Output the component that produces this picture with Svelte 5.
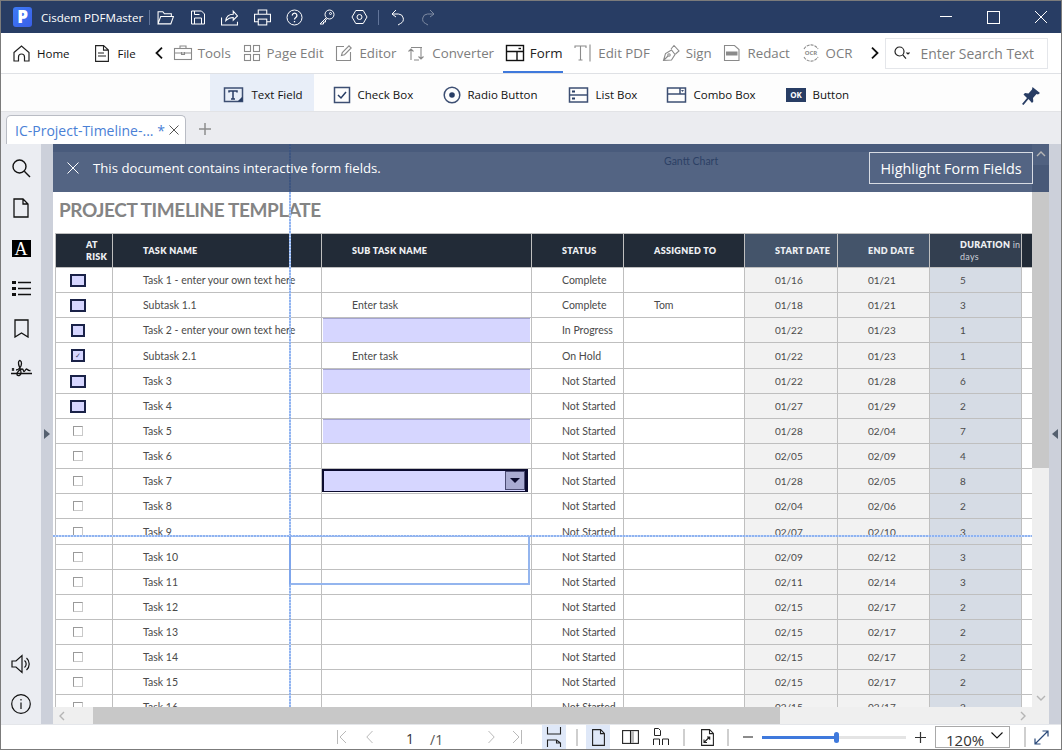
<script lang="ts">
	const tools = [
		{ label: 'Tools', icon: 'tools' },
		{ label: 'Page Edit', icon: 'pages' },
		{ label: 'Editor', icon: 'editor' },
		{ label: 'Converter', icon: 'convert' },
		{ label: 'Form', icon: 'form', active: true },
		{ label: 'Edit PDF', icon: 'editpdf' },
		{ label: 'Sign', icon: 'sign' },
		{ label: 'Redact', icon: 'redact' },
		{ label: 'OCR', icon: 'ocr' }
	];

	const formTools = [
		{ label: 'Text Field', icon: 'text', cls: 'w-text', active: true },
		{ label: 'Check Box', icon: 'check', cls: 'w-check' },
		{ label: 'Radio Button', icon: 'radio', cls: 'w-radio' },
		{ label: 'List Box', icon: 'list', cls: 'w-list' },
		{ label: 'Combo Box', icon: 'combo', cls: 'w-combo' },
		{ label: 'Button', icon: 'ok', cls: 'w-ok' }
	];

	// name, sub task, status, assigned, start, end, duration, box style, field type
	const rows = [
		['Task 1 - enter your own text here', '', 'Complete', '', '01/16', '01/21', '5', 'big', ''],
		['Subtask 1.1', 'Enter task', 'Complete', 'Tom', '01/18', '01/21', '3', 'big', ''],
		['Task 2 - enter your own text here', '', 'In Progress', '', '01/22', '01/23', '1', 'mid', 'field'],
		['Subtask 2.1', 'Enter task', 'On Hold', '', '01/22', '01/23', '1', 'tick', ''],
		['Task 3', '', 'Not Started', '', '01/22', '01/28', '6', 'big', 'field'],
		['Task 4', '', 'Not Started', '', '01/27', '01/29', '2', 'big', ''],
		['Task 5', '', 'Not Started', '', '01/28', '02/04', '7', '', 'field'],
		['Task 6', '', 'Not Started', '', '02/05', '02/09', '4', '', ''],
		['Task 7', '', 'Not Started', '', '01/28', '02/05', '8', '', 'combo'],
		['Task 8', '', 'Not Started', '', '02/04', '02/06', '2', '', ''],
		['Task 9', '', 'Not Started', '', '02/07', '02/10', '3', '', ''],
		['Task 10', '', 'Not Started', '', '02/09', '02/12', '3', '', ''],
		['Task 11', '', 'Not Started', '', '02/11', '02/14', '3', '', ''],
		['Task 12', '', 'Not Started', '', '02/15', '02/17', '2', '', ''],
		['Task 13', '', 'Not Started', '', '02/15', '02/17', '2', '', ''],
		['Task 14', '', 'Not Started', '', '02/15', '02/17', '2', '', ''],
		['Task 15', '', 'Not Started', '', '02/15', '02/17', '2', '', ''],
		['Task 16', '', 'Not Started', '', '02/15', '02/17', '2', '', '']
	];

	// these two rows are a pixel taller in the rendered PDF
	const tallRows = ['Subtask 2.1', 'Task 9'];
</script>

{#snippet toolIcon(name)}
	<svg class="ti" width="20" height="20" viewBox="0 0 20 20" fill="none" stroke="currentColor" stroke-width="1.1">
		{#if name === 'tools'}
			<rect x="1.5" y="5.5" width="17" height="11" /><path d="M1.5 10h17M7 5.5V3h6v2.5M8.5 9v2.5h3V9" />
		{:else if name === 'pages'}
			<rect x="2.5" y="2.5" width="6" height="6" /><rect x="11.5" y="2.5" width="6" height="6" /><rect x="2.5" y="11.5" width="6" height="6" /><rect x="11.5" y="11.5" width="6" height="6" />
		{:else if name === 'editor'}
			<path d="M10 3.5H2.5v14h14V9" /><path d="M7.5 12.5l.8-3L15 2.8l2.2 2.2-6.7 6.7z" />
		{:else if name === 'convert'}
			<path d="M4 17V6M1.5 8.5L4 6l2.5 2.500M4 4.5h11M14 4v12M11.5 13.5L14 16l2.5-2.500M7 17h5" />
		{:else if name === 'form'}
			<g stroke-width="1.4"><rect x="1.5" y="2.5" width="17" height="15" /><path d="M1.5 8.5h17M12 8.500v9" /><path d="M13.5 5.500h2.500" /></g>
		{:else if name === 'editpdf'}
			<path d="M2 5V3h11v2M7.5 3v14M5.5 17h4M17 1.500v17" />
		{:else if name === 'sign'}
			<path d="M2.5 17.5l2-7 6-3.500 3.500 4.500-3.500 5.500zM2.5 17.5l4.500-4.500M10 6l3-3.500 5 5.500-3.500 3" /><circle cx="8" cy="12" r="1.2" />
		{:else if name === 'redact'}
			<path d="M2.5 2.5h10l4.500 4v11h-14.500z" /><rect x="4" y="8.5" width="11.5" height="4" fill="currentColor" stroke="none" />
		{:else if name === 'ocr'}
			<path d="M3 6a8 8 0 0 1 14 0M3 14a8 8 0 0 0 14 0" stroke-dasharray="3 1" />
			<text x="10" y="12.3" text-anchor="middle" font-size="6" font-weight="700" stroke="none" fill="currentColor" font-family="'Open Sans', sans-serif">OCR</text>
		{/if}
	</svg>
{/snippet}

{#snippet formIcon(name)}
	{#if name === 'text'}
		<svg width="22" height="18" viewBox="0 0 22 18" fill="none" stroke="#3d4f73" stroke-width="1.5">
			<rect x="1.5" y="2" width="18" height="13.5" /><path d="M6 6.5V5h8v1.500M10 5v8M8 13h4" stroke="#283d64" /><path d="M14.5 15.5l5-5v5z" fill="#283d64" stroke="none" />
		</svg>
	{:else if name === 'check'}
		<svg width="18" height="18" viewBox="0 0 18 18" fill="none" stroke="#3d4f73" stroke-width="1.5">
			<rect x="1.5" y="1.5" width="15" height="15" /><path d="M5 9l3 3 5-6" stroke="#283d64" />
		</svg>
	{:else if name === 'radio'}
		<svg width="18" height="18" viewBox="0 0 18 18" fill="none" stroke="#3d4f73" stroke-width="1.5">
			<circle cx="9" cy="9" r="7.8" /><circle cx="9" cy="9" r="2.8" fill="#283d64" stroke="none" />
		</svg>
	{:else if name === 'list'}
		<svg width="21" height="18" viewBox="0 0 21 18" fill="none" stroke="#3d4f73" stroke-width="1.5">
			<rect x="1.5" y="2" width="18" height="14" /><path d="M1.5 9h18" /><path d="M4 5.500h3M4 12.500h3" stroke="#283d64" stroke-width="2" />
		</svg>
	{:else if name === 'combo'}
		<svg width="21" height="18" viewBox="0 0 21 18" fill="none" stroke="#3d4f73" stroke-width="1.5">
			<rect x="1.5" y="2" width="18" height="14" /><path d="M1.5 8h18M14 8V2" /><path d="M15 4h3l-1.500 2z" fill="#3d4f73" stroke="none" />
		</svg>
	{/if}
{/snippet}

<div class="window">
	<header class="titlebar">
		<div class="logo">P</div>
		<span class="app-name">Cisdem PDFMaster</span>
		<i class="tsep first"></i>
		<div class="quick">
			<svg width="17" height="17" viewBox="0 0 16 16" fill="none" stroke="#fff" stroke-width="1"><path d="M1 14V2.500h4.500l1.500 2h6.500V7M1 14l2.500-7H15.500l-2.500 7z" /></svg>
			<svg width="16" height="17" viewBox="0 0 16 16" fill="none" stroke="#fff" stroke-width="1"><path d="M1.500 1.500h10l3 3v10h-13z" /><path d="M4.500 14.500V8.500h7v6M4.500 1.500V5h5" /></svg>
			<svg width="17" height="17" viewBox="0 0 16 16" fill="none" stroke="#fff" stroke-width="1"><path d="M.5 8v7h15v-3M4.500 11c.5-4 3.500-6 7-6V2l4 4.500-4 4V8c-3 0-5 1-7 3z" /></svg>
			<svg width="17" height="17" viewBox="0 0 16 16" fill="none" stroke="#fff" stroke-width="1"><path d="M4 5V1h8v4M4 12H.5V5h15v7H12" /><rect x="4" y="9.500" width="8" height="5.500" /></svg>
			<svg width="17" height="17" viewBox="0 0 17 17" fill="none" stroke="#fff" stroke-width="1"><circle cx="8.500" cy="8.500" r="7.500" /><path d="M6.300 6.500a2.300 2.300 0 1 1 3.500 2c-.9.600-1.300 1-1.300 2" stroke-width="1.300" /><path d="M8.500 12v1.300" stroke-width="1.300" /></svg>
			<svg width="16" height="16" viewBox="0 0 16 16" fill="none" stroke="#fff" stroke-width="1"><circle cx="10.500" cy="5.500" r="4.500" /><path d="M7.300 8.700L1 15h3.500v-2H6.500v-2l2-1.500" /><circle cx="11.500" cy="4.500" r="1" /></svg>
			<svg width="17" height="16" viewBox="0 0 17 16" fill="none" stroke="#fff" stroke-width="1"><path d="M4.800 1.500h7.400L16 8l-3.800 6.500H4.800L1 8z" /><circle cx="8.500" cy="8" r="2.500" /></svg>
		</div>
		<i class="tsep second"></i>
		<div class="history">
			<svg width="14" height="17" viewBox="0 0 14 17" fill="none" stroke="#fff" stroke-width="1"><path d="M5 1L1 5l4 3M1 5h6.500a5 5 0 0 1 2 9.500L7 16" /></svg>
			<svg class="dim" width="14" height="17" viewBox="0 0 14 17" fill="none" stroke="#fff" stroke-width="1"><path d="M9 1l4 4-4 3M13 5H6.500a5 5 0 0 0-2 9.500L7 16" /></svg>
		</div>
		<div class="winctl">
			<svg width="12" height="12" viewBox="0 0 12 12" stroke="#fff" fill="none"><path d="M0 5.500h12" /></svg>
			<svg width="13" height="13" viewBox="0 0 13 13" stroke="#fff" fill="none"><rect x=".5" y=".5" width="12" height="12" /></svg>
			<svg width="12" height="12" viewBox="0 0 12 12" stroke="#fff" fill="none"><path d="M0 0l12 12M12 0L0 12" /></svg>
		</div>
	</header>

	<nav class="toolbar">
		<button class="nav home">
			<svg width="17" height="17" viewBox="0 0 17 17" fill="none" stroke="#222" stroke-width="1.2"><path d="M1 7.500L8.500 1 16 7.500V16h-4.500v-4a3 3 0 0 0-6 0v4H1z" /></svg>
			Home
		</button>
		<button class="nav file">
			<svg width="14" height="17" viewBox="0 0 14 17" fill="none" stroke="#222" stroke-width="1.1"><path d="M.6.6h8l4.800 4.500v11.300H.6zM8.500.6v4.500h5M3 8h6M3 11h8" /></svg>
			File
		</button>
		<svg class="chev-l" width="8" height="12" viewBox="0 0 8 12" fill="none" stroke="#111" stroke-width="1.8"><path d="M7 .7L1.500 6 7 11.300" /></svg>
		<div class="tools">
			{#each tools as t}
				<button class="tool" class:active={t.active}>
					{@render toolIcon(t.icon)}
					{t.label}
				</button>
			{/each}
		</div>
		<svg class="chev-r" width="8" height="12" viewBox="0 0 8 12" fill="none" stroke="#111" stroke-width="1.8"><path d="M1 .7L6.500 6 1 11.300" /></svg>
		<div class="search">
			<svg width="16" height="14" viewBox="0 0 16 14" fill="none" stroke="#222" stroke-width="1.2"><circle cx="5.500" cy="5.500" r="4.500" /><path d="M8.800 8.800l3.200 3.800M12.500 6.500l1.500 1.500 1.500-1.500" /></svg>
			<span>Enter Search Text</span>
		</div>
	</nav>

	<div class="ribbon">
		{#each formTools as f}
			<button class="form-tool {f.cls}" class:active={f.active}>
				{#if f.icon === 'ok'}
					<span class="ok">OK</span>
				{:else}
					{@render formIcon(f.icon)}
				{/if}
				{f.label}
			</button>
		{/each}
		<svg class="pin" width="18" height="18" viewBox="0 0 18 18" fill="#283d64"><path d="M10.500 0l7.500 6-2 1.500-1.500-.5-3.500 4 .3 3.500-1.300 1.500L6.500 12 1.500 18 0 17l5-6-3.500-3.500L3 6l3.500.5 3.500-4z" /></svg>
	</div>

	<div class="tabs">
		<div class="tab">
			<span>IC-Project-Timeline-... *</span>
			<svg width="10" height="10" viewBox="0 0 10 10" stroke="#555" fill="none"><path d="M.5.5l9 9M9.500.5l-9 9" /></svg>
		</div>
		<svg class="add" width="12" height="12" viewBox="0 0 12 12" stroke="#8d8d8d" stroke-width="1.5" fill="none"><path d="M6 0v12M0 6h12" /></svg>
	</div>

	<main class="main">
		<aside class="sidebar">
			<div class="side-group">
				<svg width="20" height="20" viewBox="0 0 20 20" fill="none" stroke="#111" stroke-width="1.4"><circle cx="8.500" cy="8.500" r="6.500" /><path d="M13.300 13.300L19 19" /></svg>
				<svg width="16" height="20" viewBox="0 0 16 20" fill="none" stroke="#111" stroke-width="1.3"><path d="M1 1h9l5 5v13H1zM10 1v5h5" /></svg>
				<div class="a-icon">A</div>
				<svg width="19" height="17" viewBox="0 0 19 17" fill="none" stroke="#111"><path d="M6 2.500h13M6 8.500h13M6 14.500h13" stroke-width="1.3" /><path d="M0 2.500h4M0 8.500h4M0 14.500h4" stroke-width="3" /></svg>
				<svg width="15" height="19" viewBox="0 0 15 19" fill="none" stroke="#111" stroke-width="1.3"><path d="M1 1h13v17l-6.500-4L1 18z" /></svg>
				<svg width="21" height="18" viewBox="0 0 21 18" fill="none" stroke="#111" stroke-width="1.3"><path d="M0 14.500h21M1 9.500l2 2M3 9.500l-2 2" /><path d="M5 11c2.500 0 5.500-3 5.500-6.500S8 0.500 7.500 3.500 10 10 10 13.500 6.500 17.500 6 15.500s3-5.500 5-5.500 1 2.500 2 2.500 1.500-2.500 2.500-2.500 1 2 4 1.500" /></svg>
			</div>
			<div class="side-group">
				<svg width="20" height="20" viewBox="0 0 20 20" fill="none" stroke="#111" stroke-width="1.2"><path d="M1 7h4l6-5.500v17L5 13H1zM13.500 6.500a4.500 4.500 0 0 1 0 7M15.500 4a8 8 0 0 1 0 12" /></svg>
				<svg width="20" height="20" viewBox="0 0 20 20" fill="none" stroke="#111" stroke-width="1.2"><circle cx="10" cy="10" r="9.300" /><path d="M10 8.500V15" /><path d="M10 5v1.500" /></svg>
			</div>
		</aside>

		<div class="strip left">
			<svg width="6" height="10" viewBox="0 0 6 10" fill="#55606f"><path d="M0 0l6 5-6 5z" /></svg>
		</div>

		<section class="viewer">
			<article class="page">
				<p class="gantt">Gantt Chart</p>
				<h1>PROJECT TIMELINE TEMPLATE</h1>
				<table>
					<colgroup>
						<col class="c1" /><col class="c2" /><col class="c3" /><col class="c4" /><col class="c5" /><col class="c6" /><col class="c7" /><col class="c8" /><col class="c9" />
					</colgroup>
					<thead>
						<tr>
							<th class="risk">AT<br />RISK</th>
							<th class="p-name">TASK NAME</th>
							<th class="p-sub">SUB TASK NAME</th>
							<th class="p-status">STATUS</th>
							<th class="p-who">ASSIGNED TO</th>
							<th class="p-date hd-date">START DATE</th>
							<th class="p-date hd-date">END DATE</th>
							<th class="p-date hd-dur">DURATION <span>in<br />days</span></th>
							<th></th>
						</tr>
					</thead>
					<tbody>
						{#each rows as r}
							<tr class:tall={tallRows.includes(r[0])}>
								<td class="box-cell"><span class="box {r[7]}">{#if r[7] === 'tick'}✓{/if}</span></td>
								<td class="p-name">{r[0]}</td>
								<td class="p-sub" class:has-field={r[8]}>
									{#if r[8] === 'field'}
										<div class="field"></div>
									{:else if r[8] === 'combo'}
										<div class="combo-field"><b><i></i></b></div>
									{:else}
										{r[1]}
									{/if}
								</td>
								<td class="p-status">{r[2]}</td>
								<td class="p-who">{r[3]}</td>
								<td class="p-date date">{r[4]}</td>
								<td class="p-date date">{r[5]}</td>
								<td class="p-date dur">{r[6]}</td>
								<td></td>
							</tr>
						{/each}
					</tbody>
				</table>
			</article>

			<!-- overlays: guide lines and the marquee drawn over the page -->
			<div class="guide-v"></div>
			<div class="guide-h"></div>
			<div class="marquee"></div>

			<div class="vscroll">
				<svg class="up" width="10" height="6" viewBox="0 0 10 6" stroke="#b5b5b5" stroke-width="1.4" fill="none"><path d="M1 5l4-4 4 4" /></svg>
				<div class="vthumb"></div>
				<svg width="10" height="6" viewBox="0 0 10 6" stroke="#b5b5b5" stroke-width="1.4" fill="none"><path d="M1 1l4 4 4-4" /></svg>
			</div>
			<div class="hscroll">
				<svg width="6" height="10" viewBox="0 0 6 10" stroke="#b5b5b5" stroke-width="1.4" fill="none"><path d="M5 1L1 5l4 4" /></svg>
				<div class="hthumb"></div>
				<svg width="6" height="10" viewBox="0 0 6 10" stroke="#b5b5b5" stroke-width="1.4" fill="none"><path d="M1 1l4 4-4 4" /></svg>
			</div>

			<div class="banner">
				<svg width="12" height="12" viewBox="0 0 12 12" stroke="#fff" fill="none"><path d="M.5.5l11 11M11.500.5l-11 11" /></svg>
				<span>This document contains interactive form fields.</span>
				<button class="hl">Highlight Form Fields</button>
			</div>
		</section>

		<div class="strip right">
			<svg width="6" height="10" viewBox="0 0 6 10" fill="#55606f"><path d="M6 0L0 5l6 5z" /></svg>
		</div>
	</main>

	<footer class="statusbar">
		<svg class="g1" width="10" height="14" viewBox="0 0 10 14" fill="none" stroke="#b9b9b9"><path d="M.5 0v14M9 1L3 7l6 6" /></svg>
		<svg class="g2" width="7" height="14" viewBox="0 0 7 14" fill="none" stroke="#b9b9b9"><path d="M6.500 1L.8 7l5.700 6" /></svg>
		<span class="pg">1</span>
		<span class="pg-total">/1</span>
		<svg class="g3" width="7" height="14" viewBox="0 0 7 14" fill="none" stroke="#b9b9b9"><path d="M.5 1l5.700 6-5.700 6" /></svg>
		<svg class="g4" width="10" height="14" viewBox="0 0 10 14" fill="none" stroke="#b9b9b9"><path d="M9.500 0v14M1 1l6 6-6 6" /></svg>
		<div class="st-btn on g5">
			<svg width="16" height="20" viewBox="0 0 16 20" fill="none" stroke="#222" stroke-width="1.1"><path d="M1.500 0v7h13V0M1.500 20v-7h9l4 3v4M10.500 13v3h4" /></svg>
		</div>
		<i class="ssep s1"></i>
		<div class="st-btn on g6">
			<svg width="13" height="17" viewBox="0 0 13 17" fill="none" stroke="#222" stroke-width="1.1"><path d="M.6.6h8l3.800 3.800v12H.6zM8.500.6v4h4" /></svg>
		</div>
		<svg class="g7" width="17" height="14" viewBox="0 0 17 14" fill="none" stroke="#222" stroke-width="1.1"><rect x=".6" y=".6" width="15.800" height="12.800" /><path d="M8.500.6v12.800" /><rect x="9" y="1" width="3" height="12" fill="#bbb" stroke="none" /></svg>
		<svg class="g8" width="16" height="18" viewBox="0 0 16 18" fill="none" stroke="#222"><path d="M1.500.5h4l2 2v5h-6zM.5 17v-6h6v6M9.500 17v-6h6v6" /></svg>
		<i class="ssep s2"></i>
		<svg class="g9" width="13" height="17" viewBox="0 0 13 17" fill="none" stroke="#222" stroke-width="1.1"><path d="M.6.6h8l3.800 3.800v12H.6zM8.500.6v4h4M3.500 13l5-5M6 8h2.700v2.700M3 10.500V13.500h3" /></svg>
		<i class="ssep s3"></i>
		<div class="minus"></div>
		<div class="slider"><div class="fill" style="width: {(75 / 144) * 100}%"></div><div class="knob"></div></div>
		<svg class="g10" width="11" height="11" viewBox="0 0 11 11" stroke="#333" stroke-width="1.2" fill="none"><path d="M5.500 0v11M0 5.500h11" /></svg>
		<div class="zoom-box">
			<span>120%</span>
			<svg width="12" height="7" viewBox="0 0 12 7" stroke="#111" fill="none" stroke-width="1.1"><path d="M.5.5L6 6l5.500-5.500" /></svg>
		</div>
		<i class="ssep s4"></i>
		<svg class="g11" width="15" height="15" viewBox="0 0 15 15" fill="none" stroke="#2b4a7a" stroke-width="1.2"><path d="M1 14L14 1M8.500 1H14v5.500M1 8.500V14h5.500" /></svg>
	</footer>
</div>

<style>
	:global(body) {
		margin: 0;
		background: #fff;
	}

	.window {
		box-sizing: border-box;
		width: 1062px;
		height: 750px;
		display: flex;
		flex-direction: column;
		border: 1px solid #7b7b7b;
		overflow: hidden;
		font-family: 'Open Sans', 'Noto Sans', sans-serif;
		position: relative;
	}

	button {
		background: none;
		border: none;
		padding: 0;
		font: inherit;
		color: inherit;
		display: flex;
		align-items: center;
	}

	.titlebar {
		flex: 0 0 32px;
		display: flex;
		align-items: center;
		background: #283d64;
		color: #fff;
	}

	.logo {
		width: 19px;
		height: 20px;
		margin-left: 12px;
		border-radius: 3px;
		background: linear-gradient(135deg, #3d7bf5, #3a5ee8);
		color: #fff;
		font-weight: 800;
		font-size: 17px;
		line-height: 20px;
		text-align: center;
	}

	.app-name {
		margin-left: 9px;
		font-size: 11.6px;
		width: 108px;
		white-space: nowrap;
	}

	.tsep {
		width: 1px;
		height: 15px;
		background: #62759a;
	}

	.quick {
		margin-left: 7px;
		display: flex;
		align-items: center;
		gap: 15.6px;
	}

	.tsep.second {
		margin-left: 10px;
	}

	.history {
		margin-left: 12px;
		display: flex;
		align-items: center;
		gap: 16px;
	}

	.dim {
		opacity: 0.4;
	}

	.winctl {
		margin-left: auto;
		margin-right: 14px;
		display: flex;
		align-items: center;
		gap: 35px;
	}

	.toolbar {
		flex: 0 0 41px;
		box-sizing: border-box;
		display: flex;
		align-items: center;
		background: #fff;
		border-bottom: 1px solid #dfe1e5;
	}

	.nav {
		font-size: 11.5px;
		color: #111;
		gap: 7px;
	}

	.home {
		margin-left: 12px;
	}

	.file {
		margin-left: 25px;
		gap: 9px;
	}

	.chev-l {
		margin-left: 19px;
	}

	.tools {
		margin-left: 10px;
		display: flex;
		gap: 10.8px;
		align-self: stretch;
	}

	.tool {
		font-size: 13.3px;
		color: #7d7d7d;
		gap: 5px;
		position: relative;
		white-space: nowrap;
	}

	.ti {
		color: #8a8a8a;
		flex: none;
	}

	.tool.active {
		color: #222;
	}

	.tool.active .ti {
		color: #111;
	}

	.tool.active::after {
		content: '';
		position: absolute;
		left: -2px;
		right: -1px;
		bottom: 0;
		height: 2px;
		background: #3f79dc;
	}

	.chev-r {
		margin-left: 18px;
	}

	.search {
		margin-left: 6px;
		width: 163px;
		height: 31px;
		box-sizing: border-box;
		border: 1px solid #e4e6ea;
		display: flex;
		align-items: center;
		padding-left: 8px;
		gap: 11px;
		font-size: 13.9px;
		color: #7d7d7d;
		white-space: nowrap;
	}

	.ribbon {
		flex: 0 0 38px;
		box-sizing: border-box;
		display: flex;
		background: #fdfdfd;
		border-bottom: 1px solid #e2e3e6;
		padding-left: 209px;
		position: relative;
	}

	.form-tool {
		font-size: 11.5px;
		color: #111;
		gap: 6.5px;
		white-space: nowrap;
		padding-top: 4px;
		box-sizing: border-box;
	}

	.form-tool.active {
		background: #e8eef8;
	}

	.w-text {
		width: 104px;
		padding-left: 13px;
	}

	.w-check {
		margin-left: 19px;
		width: 110px;
	}

	.w-radio {
		width: 125px;
	}

	.w-list {
		width: 98px;
	}

	.w-combo {
		width: 120px;
	}

	.ok {
		width: 20px;
		height: 14px;
		background: #283d64;
		color: #fff;
		font-size: 8px;
		font-weight: 700;
		line-height: 14px;
		text-align: center;
	}

	.pin {
		position: absolute;
		left: 1021px;
		top: 13px;
	}

	.tabs {
		flex: 0 0 32px;
		display: flex;
		align-items: flex-end;
		background: #ebecf0;
	}

	.tab {
		box-sizing: border-box;
		margin-left: 5px;
		width: 180px;
		height: 29px;
		background: #fff;
		border: 1px solid #b9bcc4;
		border-bottom: none;
		border-radius: 5px 5px 0 0;
		display: flex;
		align-items: center;
		padding-left: 8px;
		gap: 4px;
		font-size: 14px;
		color: #4a80d6;
		white-space: nowrap;
	}

	.add {
		margin-left: 13px;
		margin-bottom: 9px;
	}

	.main {
		flex: 1;
		min-height: 0;
		display: flex;
		border-bottom: 1px solid #e4e6ea;
	}

	.sidebar {
		flex: 0 0 40px;
		background: #ebedf2;
		display: flex;
		flex-direction: column;
		justify-content: space-between;
		padding-top: 4px;
		box-sizing: border-box;
	}

	.side-group {
		display: grid;
		grid-auto-rows: 40px;
		place-items: center;
	}

	.a-icon {
		width: 19px;
		height: 17px;
		background: #000;
		color: #fff;
		font-family: 'Liberation Serif', serif;
		font-size: 18px;
		line-height: 18px;
		text-align: center;
	}

	.strip {
		flex: 0 0 12px;
		background: #ccd0da;
		display: flex;
		align-items: center;
		justify-content: center;
	}

	.viewer {
		flex: 1;
		min-width: 0;
		position: relative;
		overflow: hidden;
		background: #ccd0da;
	}

	.page {
		margin-top: 8px;
		margin-right: 17px;
		background: #fff;
		height: 100%;
		overflow: hidden;
		font-family: Lato, 'Open Sans', sans-serif;
	}

	.gantt {
		margin: 0;
		padding: 3px 0 0 611px;
		height: 15px;
		font-size: 10.5px;
		color: #3b4a66;
	}

	h1 {
		margin: 28px 0 0 6px;
		height: 35px;
		font-size: 19px;
		font-weight: 700;
		letter-spacing: -0.4px;
		color: #848484;
		white-space: nowrap;
	}

	table {
		margin-left: 2px;
		width: 1000px;
		table-layout: fixed;
		border-collapse: collapse;
		font-size: 10.5px;
		color: #4a4a4a;
	}

	.c1 { width: 57px; }
	.c2 { width: 209px; }
	.c3 { width: 210px; }
	.c4 { width: 92px; }
	.c5 { width: 121px; }
	.c6 { width: 93px; }
	.c7 { width: 92px; }
	.c8 { width: 92px; }
	.c9 { width: 34px; }

	th {
		box-sizing: border-box;
		height: 34px;
		padding: 0;
		border: 1px solid #bfbfbf;
		background: #222b37;
		color: #eef0f3;
		font-size: 9px;
		font-weight: 800;
		letter-spacing: 0.3px;
		text-align: left;
		line-height: 12px;
	}

	th.risk {
		padding-left: 30px;
	}

	th.hd-date {
		background: #44546a;
	}

	th.hd-dur {
		background: #333f50;
	}

	th span {
		font-weight: 400;
		color: #c9ced6;
	}

	td {
		box-sizing: border-box;
		height: 25px;
		padding: 0;
		border: 1px solid #bfbfbf;
		white-space: nowrap;
		overflow: hidden;
	}

	tr.tall td {
		height: 26px;
	}

	.p-name,
	.p-sub,
	.p-status,
	.p-who {
		padding-left: 30px;
	}

	th.p-date,
	td.p-date {
		padding-left: 30px;
	}

	td.p-date {
		font-size: 10px;
	}

	.date {
		background: #f2f2f2;
	}

	.dur {
		background: #d6dce5;
	}

	.box-cell {
		text-align: center;
	}

	.box {
		display: block;
		box-sizing: border-box;
		width: 10px;
		height: 10px;
		margin: 0 auto;
		border: 1px solid #9a9a9a;
		border-right-color: #c9c9c9;
		border-bottom-color: #c9c9c9;
		background: #fff;
		position: relative;
		left: -6px;
	}

	.box.big,
	.box.mid,
	.box.tick {
		border: 2px solid #1a2248;
		background: #d6d6ff;
		height: 13px;
	}

	.box.big {
		width: 16px;
	}

	.box.mid,
	.box.tick {
		width: 14px;
	}

	.box.tick {
		font-size: 7px;
		line-height: 9px;
		text-align: center;
		color: #44446a;
	}

	td.has-field {
		padding: 0;
		vertical-align: top;
	}

	.field {
		height: 24px;
		margin: 0 1px;
		background: #d6d6ff;
		border-top: 1px solid #a4a4d0;
		box-sizing: border-box;
	}

	.combo-field {
		box-sizing: border-box;
		height: 23px;
		margin-right: 3px;
		background: #d6d6ff;
		border: 2px solid #0b0b2e;
		border-bottom-width: 1px;
		border-right-width: 3px;
		display: flex;
		justify-content: flex-end;
	}

	.combo-field b {
		width: 18px;
		margin-bottom: 1px;
		background: #a9abd2;
		border: 1px solid #4a4a72;
		display: flex;
		align-items: center;
		justify-content: center;
	}

	.combo-field i {
		border: 5px solid transparent;
		border-top: 5px solid #0b0b2e;
		border-bottom: none;
	}

	.guide-v {
		position: absolute;
		left: 236px;
		top: 0;
		bottom: 17px;
		width: 2px;
		background: repeating-linear-gradient(#8fb3f0 0 2px, #c6d8f8 2px 3px);
	}

	.guide-h {
		position: absolute;
		left: 0;
		right: 17px;
		top: 391px;
		height: 2px;
		background: repeating-linear-gradient(90deg, #8fb3f0 0 2px, #c6d8f8 2px 3px);
	}

	.marquee {
		position: absolute;
		left: 236px;
		top: 392px;
		width: 241px;
		height: 49px;
		box-sizing: border-box;
		border: 2px solid #94b5ee;
		border-top-width: 1px;
		border-left-color: #7fa6ec;
	}

	.banner {
		position: absolute;
		left: 0;
		right: 0;
		top: 0;
		height: 48px;
		display: flex;
		align-items: center;
		padding-left: 14px;
		gap: 14px;
		background: rgba(40, 61, 100, 0.8);
		color: #fff;
		font-size: 13.2px;
	}

	.hl {
		position: absolute;
		left: 816px;
		top: 8px;
		width: 164px;
		height: 32px;
		box-sizing: border-box;
		justify-content: center;
		border: 1px solid #d7dbe3;
		font-size: 14.4px;
	}

	.vscroll {
		position: absolute;
		top: 0;
		right: 0;
		bottom: 0;
		width: 17px;
		background: #efefef;
		display: flex;
		flex-direction: column;
		align-items: center;
		justify-content: space-between;
		padding: 7px 0 23px;
		box-sizing: border-box;
	}

	.vthumb {
		position: absolute;
		left: 0;
		right: 0;
		top: 21px;
		height: 303px;
		background: #c8c8c8;
	}

	.up {
		position: relative;
		z-index: 2;
	}

	.hscroll {
		position: absolute;
		left: 0;
		right: 17px;
		bottom: 0;
		height: 17px;
		background: #efefef;
		display: flex;
		align-items: center;
		justify-content: space-between;
		padding: 0 6px;
		box-sizing: border-box;
	}

	.hthumb {
		position: absolute;
		left: 40px;
		top: 0;
		bottom: 0;
		width: 687px;
		background: #c8c8c8;
	}

	.statusbar {
		flex: 0 0 24px;
		display: flex;
		align-items: center;
		background: #fff;
		font-size: 14px;
		color: #333;
		position: relative;
		white-space: nowrap;
	}

	.g1 { margin-left: 336px; }
	.g2 { margin-left: 19px; }
	.pg { margin-left: 33px; width: 24px; padding-top: 3px; }
	.pg-total { width: 58px; color: #555; padding-top: 4px; }
	.g4 { margin-left: 17px; }

	.st-btn {
		width: 24px;
		align-self: stretch;
		display: flex;
		align-items: center;
		justify-content: center;
	}

	.st-btn.on {
		background: #dfe8f8;
	}

	.g5 { margin-left: 20px; }

	.ssep {
		width: 2px;
		height: 17px;
		background: #cfcfcf;
	}

	.s1 { margin-left: 10px; }
	.g6 { margin-left: 8px; }
	.g7 { margin-left: 12px; }
	.g8 { margin-left: 14px; }
	.s2 { margin-left: 14px; }
	.g9 { margin-left: 16px; }
	.s3 { margin-left: 13px; }

	.minus {
		margin-left: 14px;
		width: 10px;
		height: 2px;
		background: #8b8b8b;
	}

	.slider {
		margin-left: 9px;
		width: 144px;
		height: 3px;
		background: #e4e4e4;
		position: relative;
	}

	.fill {
		height: 100%;
		background: #3f79dc;
	}

	.knob {
		position: absolute;
		left: 72px;
		top: -4px;
		width: 5px;
		height: 11px;
		border-radius: 3px;
		background: #3f79dc;
	}

	.g10 { margin-left: 9px; }

	.zoom-box {
		margin-left: 9px;
		width: 75px;
		height: 22px;
		box-sizing: border-box;
		border: 1px solid #a9a9a9;
		position: relative;
		overflow: hidden;
	}

	.zoom-box span {
		position: absolute;
		left: 10px;
		top: 3px;
		font-size: 15px;
	}

	.zoom-box svg {
		position: absolute;
		right: 6px;
		top: 5px;
	}

	.s4 { margin-left: 14px; height: 20px; }
	.g11 { margin-left: 8px; }
</style>
